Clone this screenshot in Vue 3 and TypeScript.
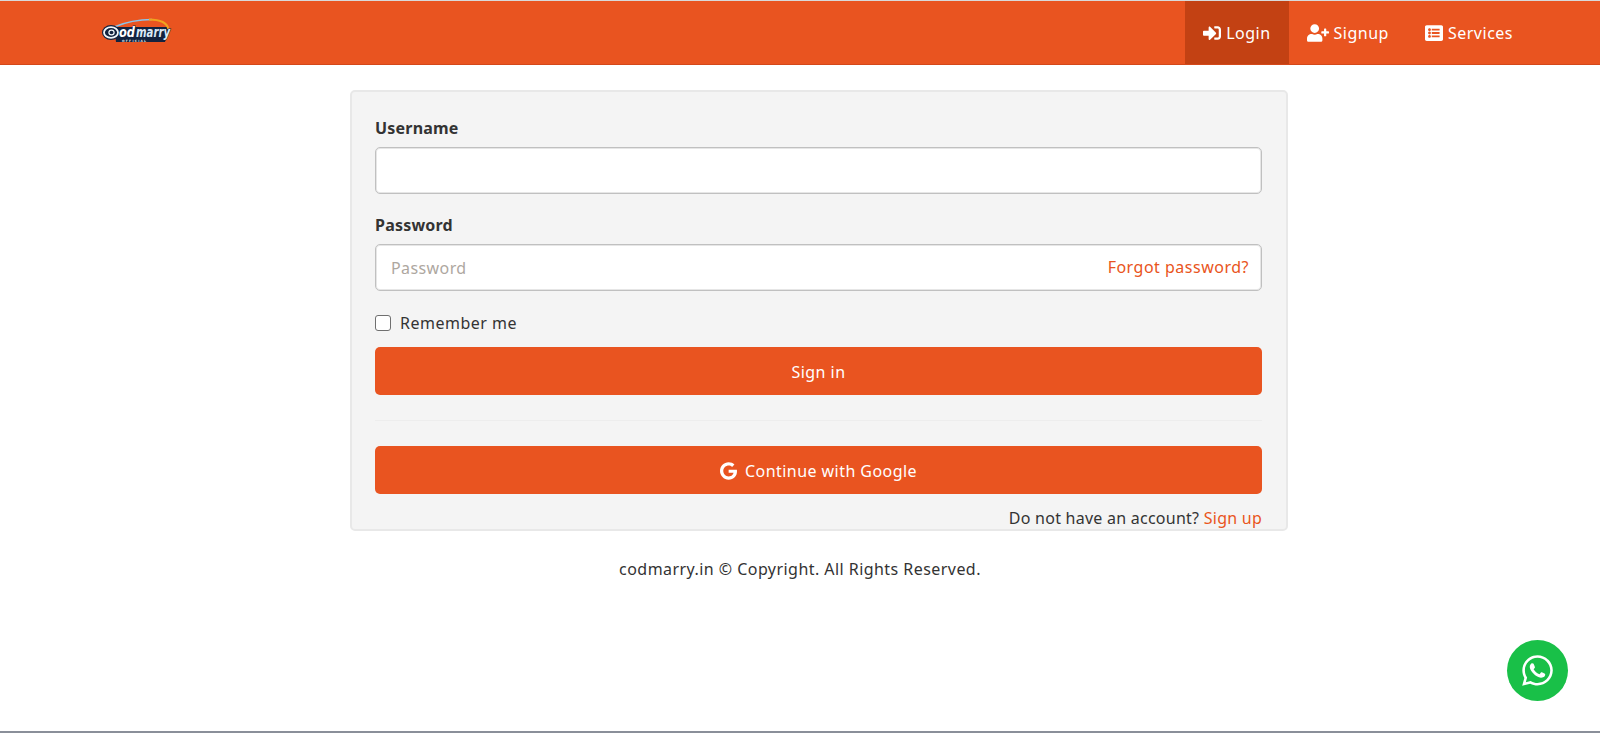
<script setup lang="ts">
interface NavItem {
  label: string
  viewBox: string
  width: number
  path: string
  active?: boolean
}

const navItems: NavItem[] = [
  {
    label: 'Login',
    viewBox: '0 0 512 512',
    width: 18,
    active: true,
    path: 'M416 448h-84c-6.6 0-12-5.4-12-12v-40c0-6.6 5.4-12 12-12h84c17.7 0 32-14.3 32-32V160c0-17.7-14.3-32-32-32h-84c-6.6 0-12-5.4-12-12V76c0-6.6 5.4-12 12-12h84c53 0 96 43 96 96v192c0 53-43 96-96 96zm-47-201L201 79c-15-15-41-4.5-41 17v96H24c-13.3 0-24 10.7-24 24v96c0 13.3 10.7 24 24 24h136v96c0 21.5 26 32 41 17l168-168c9.3-9.4 9.3-24.6 0-34z'
  },
  {
    label: 'Signup',
    viewBox: '0 0 640 512',
    width: 22,
    path: 'M624 208h-64v-64c0-8.8-7.2-16-16-16h-32c-8.8 0-16 7.2-16 16v64h-64c-8.8 0-16 7.2-16 16v32c0 8.8 7.2 16 16 16h64v64c0 8.8 7.2 16 16 16h32c8.8 0 16-7.2 16-16v-64h64c8.8 0 16-7.2 16-16v-32c0-8.8-7.2-16-16-16zm-400 48c70.7 0 128-57.3 128-128S294.7 0 224 0 96 57.3 96 128s57.3 128 128 128zm89.6 32h-16.7c-22.2 10.2-46.9 16-72.9 16s-50.6-5.8-72.9-16h-16.7C60.2 288 0 348.2 0 422.4V464c0 26.5 21.5 48 48 48h352c26.5 0 48-21.5 48-48v-41.6c0-74.2-60.2-134.4-134.4-134.4z'
  },
  {
    label: 'Services',
    viewBox: '0 0 512 512',
    width: 18,
    path: 'M464 480H48c-26.51 0-48-21.49-48-48V80c0-26.51 21.49-48 48-48h416c26.51 0 48 21.49 48 48v352c0 26.51-21.49 48-48 48zM128 120c-22.091 0-40 17.909-40 40s17.909 40 40 40 40-17.909 40-40-17.909-40-40-40zm0 96c-22.091 0-40 17.909-40 40s17.909 40 40 40 40-17.909 40-40-17.909-40-40-40zm0 96c-22.091 0-40 17.909-40 40s17.909 40 40 40 40-17.909 40-40-17.909-40-40-40zm288-136v-32c0-6.627-5.373-12-12-12H204c-6.627 0-12 5.373-12 12v32c0 6.627 5.373 12 12 12h200c6.627 0 12-5.373 12-12zm0 96v-32c0-6.627-5.373-12-12-12H204c-6.627 0-12 5.373-12 12v32c0 6.627 5.373 12 12 12h200c6.627 0 12-5.373 12-12zm0 96v-32c0-6.627-5.373-12-12-12H204c-6.627 0-12 5.373-12 12v32c0 6.627 5.373 12 12 12h200c6.627 0 12-5.373 12-12z'
  }
]

const googlePath =
  'M488 261.8C488 403.3 391.1 504 248 504 110.8 504 0 393.2 0 256S110.8 8 248 8c66.8 0 123 24.5 166.3 64.9l-67.5 64.9C258.5 52.6 94.3 116.6 94.3 256c0 86.5 69.1 156.6 153.7 156.6 98.2 0 135-70.4 140.8-106.9H248v-85.3h236.1c2.3 12.7 3.9 24.9 3.9 41.4z'
const whatsappPath =
  'M380.9 97.1C339 55.1 283.2 32 223.9 32c-122.4 0-222 99.6-222 222 0 39.1 10.2 77.3 29.6 111L0 480l117.7-30.9c32.4 17.7 68.9 26.7 106.1 26.7h.1c122.3 0 224.1-99.6 224.1-222 0-59.3-25.2-115-67.1-157zm-157 341.6c-33.2 0-65.7-8.9-94-25.7l-6.7-4-69.8 18.3L72 359.2l-4.4-7c-18.5-29.4-28.2-63.3-28.2-98.2 0-101.7 82.8-184.5 184.6-184.5 49.3 0 95.6 19.2 130.4 54.1 34.8 34.9 56.2 81.2 56.1 130.5 0 101.8-84.9 184.6-186.6 184.6zm101.2-138.2c-5.5-2.8-32.8-16.2-37.9-18-5.1-1.9-8.8-2.8-12.5 2.8-3.7 5.6-14.3 18-17.6 21.8-3.2 3.7-6.5 4.2-12 1.4-32.6-16.3-54-29.1-75.5-66-5.7-9.8 5.7-9.1 16.3-30.3 1.8-3.7.9-6.9-.5-9.7-1.4-2.8-12.5-30.1-17.1-41.2-4.5-10.8-9.1-9.3-12.5-9.5-3.2-.2-6.9-.2-10.6-.2-3.7 0-9.7 1.4-14.8 6.9-5.1 5.6-19.4 19-19.4 46.3 0 27.3 19.9 53.7 22.6 57.4 2.8 3.7 39.1 59.7 94.8 83.8 35.2 15.2 49 16.5 66.6 13.9 10.7-1.6 32.8-13.4 37.4-26.4 4.6-13 4.6-24.1 3.2-26.4-1.3-2.5-5-3.9-10.5-6.6z'
</script>

<template>
  <div class="page">
    <header class="navbar">
      <a class="brand" aria-label="codmarry">
        <svg class="logo" viewBox="0 0 70 30" width="70" height="30">
          <path d="M12 9 L67 9 L63 24 L14 24 Z" fill="#13233f" />
          <path d="M12 9 C24 4 38 1.5 50 1.5" fill="none" stroke="#8cc4ea" stroke-width="1.6" />
          <path d="M47 1.5 C58 1.5 65 5 66.5 11" fill="none" stroke="#f0a31f" stroke-width="2.2" />
          <ellipse cx="9" cy="14.5" rx="9" ry="7.5" fill="#13233f" />
          <ellipse cx="9" cy="14.5" rx="7" ry="5.3" fill="none" stroke="#f2f7fb" stroke-width="1.8" />
          <ellipse cx="9.5" cy="14.5" rx="2.6" ry="2.4" fill="none" stroke="#f2f7fb" stroke-width="1.2" />
          <text x="17" y="19" textLength="16" lengthAdjust="spacingAndGlyphs" class="logo-word">od</text>
          <text x="34" y="19" textLength="34" lengthAdjust="spacingAndGlyphs" class="logo-word marry">marry</text>
          <text x="20" y="23.6" textLength="24" class="logo-sub">OFFICIAL</text>
        </svg>
      </a>
      <nav class="nav-links">
        <a v-for="item in navItems" :key="item.label" class="nav-link" :class="{ active: item.active }">
          <svg :viewBox="item.viewBox" :width="item.width" height="18" fill="#fff"><path :d="item.path" /></svg>
          <span>{{ item.label }}</span>
        </a>
      </nav>
    </header>

    <main class="card">
      <div class="field">
        <label class="label" for="username">Username</label>
        <input id="username" class="input" type="text" />
      </div>
      <div class="field">
        <label class="label" for="password">Password</label>
        <div class="input-wrap">
          <input id="password" class="input" type="password" placeholder="Password" />
          <a class="link forgot">Forgot password?</a>
        </div>
      </div>
      <label class="remember">
        <span class="check"></span>
        <span>Remember me</span>
      </label>
      <button class="btn" type="button">Sign in</button>
      <hr class="divider" />
      <button class="btn" type="button">
        <svg viewBox="0 0 488 512" width="17" height="18" fill="#fff"><path :d="googlePath" /></svg>
        <span>Continue with Google</span>
      </button>
      <p class="signup">Do not have an account? <a class="link">Sign up</a></p>
    </main>

    <footer class="footer">codmarry.in © Copyright. All Rights Reserved.</footer>

    <a class="whatsapp" aria-label="WhatsApp">
      <svg viewBox="0 0 448 512" width="31" height="35" fill="#fff"><path :d="whatsappPath" /></svg>
    </a>
  </div>
</template>

<style>
html,
body {
  margin: 0;
  background: #fff;
}
</style>

<style scoped>
.page {
  box-sizing: border-box;
  height: 733px;
  overflow: hidden;
  position: relative;
  border-top: 1px solid #d9d9d9;
  border-bottom: 2px solid #8a8f99;
  font-family: "Noto Sans", "Open Sans", sans-serif;
  font-size: 16px;
  color: #333;
  background: #fff;
}
.navbar {
  display: flex;
  justify-content: space-between;
  align-items: stretch;
  height: 64px;
  box-sizing: border-box;
  background: #e95420;
  border-bottom: 1px solid #d4481a;
  padding: 0 69px 0 102px;
}
.brand {
  display: flex;
  align-items: center;
}
.logo {
  overflow: visible;
}
.logo-word {
  font-family: "DejaVu Sans", sans-serif;
  font-size: 14px;
  font-weight: 700;
  font-style: italic;
  fill: #fff;
  stroke: #13233f;
  stroke-width: 1px;
  paint-order: stroke;
}
.marry {
  fill: #dbeaf6;
}
.logo-sub {
  font-family: "DejaVu Sans", sans-serif;
  font-size: 3px;
  font-weight: 700;
  fill: #dfe8f0;
}
.nav-links {
  display: flex;
  align-items: stretch;
}
.nav-link {
  display: flex;
  align-items: center;
  gap: 5px;
  padding: 0 18px;
  color: #fff;
  letter-spacing: 0.5px;
}
.nav-link.active {
  background: #c34113;
}
.card {
  box-sizing: border-box;
  width: 938px;
  height: 441px;
  margin: 25px 0 0 350px;
  padding: 23px 24px 0 23px;
  background: #f4f4f4;
  border: 2px solid #e8e8e8;
  border-radius: 5px;
  display: flex;
  flex-direction: column;
}
.field {
  display: flex;
  flex-direction: column;
  gap: 8px;
  margin-bottom: 18px;
  flex-shrink: 0;
}
.label {
  font-weight: 700;
  padding-top: 2px;
  line-height: 22px;
  letter-spacing: 0.2px;
}
.input-wrap {
  position: relative;
}
.input {
  display: block;
  box-sizing: border-box;
  width: 100%;
  height: 47px;
  padding: 0 15px;
  border: 1px solid #c0c0c0;
  border-radius: 5px;
  box-shadow: inset 0 0 0 1px #e6e6e6;
  background: #fff;
  font: inherit;
  letter-spacing: 0.4px;
  color: #333;
  outline: none;
}
.input::placeholder {
  color: #aea79f;
  opacity: 1;
}
.forgot {
  position: absolute;
  right: 13px;
  top: 0;
  line-height: 47px;
  letter-spacing: 0.5px;
}
.link {
  color: #e95420;
}
.remember {
  display: flex;
  align-items: center;
  gap: 9px;
  height: 24px;
  flex-shrink: 0;
  margin-top: 2px;
  margin-bottom: 12px;
  letter-spacing: 0.5px;
}
.check {
  box-sizing: border-box;
  width: 16px;
  height: 16px;
  border: 1px solid #6f6f6f;
  border-radius: 3px;
  background: #fff;
}
.btn {
  box-sizing: border-box;
  display: flex;
  align-items: center;
  justify-content: center;
  gap: 8px;
  height: 48px;
  flex-shrink: 0;
  width: 100%;
  border: 0;
  border-radius: 5px;
  background: #e95420;
  color: #fff;
  font: inherit;
  letter-spacing: 0.45px;
  padding: 2px 0 0;
}
.divider {
  width: 100%;
  margin: 25px 0 25px;
  flex-shrink: 0;
  border: 0;
  border-top: 1px solid #ededed;
}
.signup {
  margin: 13px 0 0;
  flex-shrink: 0;
  text-align: right;
  line-height: 22px;
  letter-spacing: 0.25px;
}
.footer {
  text-align: center;
  margin-top: 26px;
  line-height: 24px;
  letter-spacing: 0.45px;
}
.whatsapp {
  position: absolute;
  left: 1507px;
  top: 639px;
  width: 61px;
  height: 61px;
  border-radius: 50%;
  background: #19c048;
  display: flex;
  align-items: center;
  justify-content: center;
}
</style>
